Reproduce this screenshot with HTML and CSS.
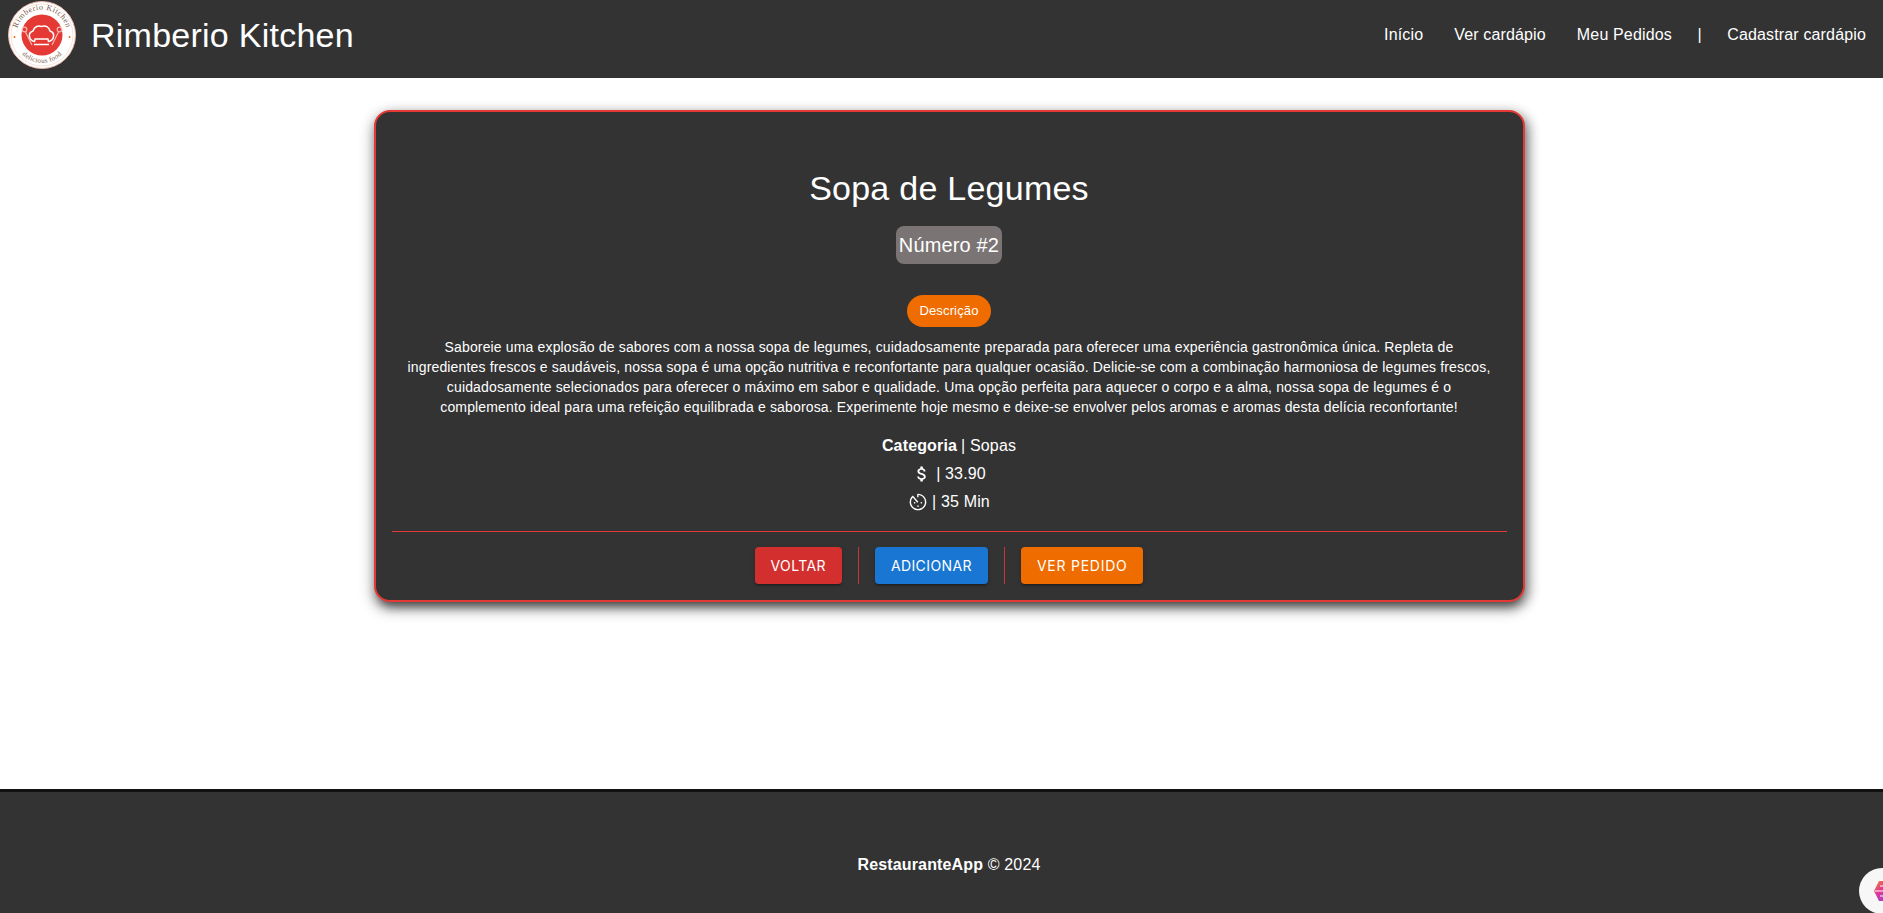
FILE: index.html
```html
<!DOCTYPE html>
<html lang="pt">
<head>
<meta charset="utf-8">
<title>Rimberio Kitchen</title>
<link rel="stylesheet" href="styles.css">
</head>
<body>
<header class="topbar">
  <div class="brand">
    <svg class="logo" viewBox="0 0 68 68" width="68" height="68" aria-hidden="true">
      <circle cx="34" cy="34" r="33.500" fill="#fff" stroke="#e8b4a8" stroke-width="1"/>
      <circle cx="34" cy="34" r="31" fill="none" stroke="#e8c9b8" stroke-width=".5"/>
      <circle cx="34" cy="34" r="20.500" fill="#e53935"/>
      <defs>
        <path id="arcTop" d="M9.400 27.400 A25.500 25.500 0 0 1 58.600 27.400"/>
        <path id="arcBottom" d="M9.800 48 A28 28 0 0 0 58.200 48"/>
      </defs>
      <text class="logo-text logo-top"><textPath href="#arcTop" startOffset="50%">Rimberio Kitchen</textPath></text>
      <text class="logo-text logo-bottom"><textPath href="#arcBottom" startOffset="50%">delicious food</textPath></text>
      <circle cx="6.500" cy="36" r="1" fill="#ef6c00"/>
      <circle cx="61.500" cy="36" r="1" fill="#ef6c00"/>
      <path d="M26 43.500 L41 43.500 M26.500 40.500 C20.500 39.500 19.500 31.500 25 30 C26.500 25 30.500 24.500 33.500 25.500 C37.500 24 41 26 42 30 C47.500 31.500 46.500 39.500 40.500 40.500 L40 38 L27 38 Z" fill="none" stroke="#fff" stroke-width="1.500" stroke-linejoin="round"/>
      <path d="M17.500 31 L24 44 M50.500 31 L44 44" stroke="#f6b7ae" stroke-width="1.200"/>
      <circle cx="16.500" cy="28.500" r="2.300" fill="none" stroke="#f6b7ae" stroke-width="1.200"/>
      <circle cx="51.500" cy="28.500" r="2.300" fill="none" stroke="#f6b7ae" stroke-width="1.200"/>
    </svg>
    <span class="brand-name">Rimberio Kitchen</span>
  </div>
  <nav class="nav">
    <a class="nav-link">Início</a>
    <a class="nav-link">Ver cardápio</a>
    <a class="nav-link">Meu Pedidos</a>
    <span class="nav-sep">|</span>
    <a class="nav-link">Cadastrar cardápio</a>
  </nav>
</header>

<main class="content">
  <section class="card">
    <h1 class="dish-title">Sopa de Legumes</h1>
    <div class="number-row"><span class="number-chip">Número #2</span></div>
    <div class="desc-row"><span class="desc-chip">Descrição</span></div>
    <p class="description">Saboreie uma explosão de sabores com a nossa sopa de legumes, cuidadosamente preparada para oferecer uma experiência gastronômica única. Repleta de ingredientes frescos e saudáveis, nossa sopa é uma opção nutritiva e reconfortante para qualquer ocasião. Delicie-se com a combinação harmoniosa de legumes frescos, cuidadosamente selecionados para oferecer o máximo em sabor e qualidade. Uma opção perfeita para aquecer o corpo e a alma, nossa sopa de legumes é o complemento ideal para uma refeição equilibrada e saborosa. Experimente hoje mesmo e deixe-se envolver pelos aromas e aromas desta delícia reconfortante!</p>
    <p class="meta"><strong>Categoria</strong> | Sopas</p>
    <p class="meta">
      <svg class="meta-icon" viewBox="0 0 24 24" width="20" height="20" aria-hidden="true"><path fill="currentColor" d="M11.800 10.900c-2.270-.59-3-1.200-3-2.150 0-1.090 1.010-1.850 2.700-1.850 1.780 0 2.440.85 2.500 2.100h2.210c-.07-1.720-1.120-3.300-3.210-3.810V3h-3v2.160c-1.940.42-3.500 1.680-3.500 3.610 0 2.310 1.910 3.460 4.700 4.130 2.500.6 3 1.480 3 2.410 0 .69-.49 1.790-2.700 1.790-2.060 0-2.870-.92-2.980-2.100h-2.200c.12 2.190 1.760 3.420 3.680 3.830V21h3v-2.150c1.950-.37 3.500-1.500 3.500-3.550 0-2.840-2.430-3.810-4.700-4.400z"/></svg>
      | 33.90
    </p>
    <p class="meta">
      <svg class="meta-icon" viewBox="0 0 24 24" width="20" height="20" aria-hidden="true"><path fill="currentColor" d="M12 2c-.550 0-1 .450-1 1v3.200h1.600V3.650c4.300.3 7.700 3.900 7.700 8.350 0 4.600-3.700 8.300-8.300 8.300S3.700 16.600 3.700 12c0-2.100.8-4 2.100-5.500l5.300 6.300 1.300-1.100L5.900 4.300C3.500 6.100 2 8.900 2 12c0 5.520 4.480 10 10 10s10-4.480 10-10S17.520 2 12 2zM7 13c0 .550.450 1 1 1s1-.450 1-1-.450-1-1-1-1 .450-1 1zm5 3c-.550 0-1 .450-1 1s.450 1 1 1 1-.450 1-1-.450-1-1-1zm5-3c0-.550-.450-1-1-1s-1 .450-1 1 .450 1 1 1 1-.450 1-1z"/></svg>
      | 35 Min
    </p>
    <hr class="rule">
    <div class="actions">
      <button class="btn btn-red">Voltar</button>
      <span class="vsep"></span>
      <button class="btn btn-blue">Adicionar</button>
      <span class="vsep"></span>
      <button class="btn btn-orange">Ver pedido</button>
    </div>
  </section>
</main>

<footer class="footer">
  <p class="footer-text"><strong>RestauranteApp</strong> © 2024</p>
</footer>

<div class="fab">
  <svg viewBox="0 0 22 22" width="22" height="22" aria-hidden="true">
    <defs><linearGradient id="fabGrad" x1="0" y1="0" x2="1" y2="1"><stop offset="0" stop-color="#f0852d"/><stop offset=".4" stop-color="#e0359a"/><stop offset="1" stop-color="#6a4cf0"/></linearGradient></defs>
    <path d="M5 1 L17 1 L22 11 L17 21 L5 21 L0 11 Z" fill="url(#fabGrad)"/>
    <path d="M1 11h8M6 6h6M6 16h6" stroke="#fff" stroke-width="1.200"/>
  </svg>
</div>
</body>
</html>
```
FILE: styles.css
```css
* { box-sizing: border-box; }
html, body { height: 100%; }
body {
  margin: 0;
  height: 913px;
  overflow: hidden;
  display: flex;
  flex-direction: column;
  background: #fff;
  font-family: "Liberation Sans", Arial, sans-serif;
  letter-spacing: .15px;
  color: #fff;
}
.topbar {
  height: 78px;
  flex: none;
  background: #333;
  display: flex;
  align-items: center;
  justify-content: space-between;
  padding: 0 17px 0 8px;
}
.brand { display: flex; align-items: center; gap: 15px; margin-top: -8px; }
.logo { display: block; }
.logo-text { font-family: "Liberation Serif", serif; fill: #7a5a4a; text-anchor: middle; }
.logo-top { font-size: 8px; letter-spacing: .5px; }
.logo-bottom { font-size: 7px; letter-spacing: .3px; }
.brand-name { font-size: 34px; line-height: 40px; letter-spacing: .25px; }
.nav { display: flex; align-items: center; gap: 31px; font-size: 16px; margin-top: -9px; }
.nav-link { color: #fff; }
.nav-sep { margin: 0 -5.500px; }
.content {
  flex: 1;
  display: flex;
  justify-content: center;
  align-items: flex-start;
  padding: 32px 0 0 15px;
}
.card {
  width: 1151px;
  height: 492px;
  background: #333;
  border: 2px solid #e53935;
  border-radius: 16px;
  box-shadow: 0 8px 10px -5px rgba(0,0,0,.5), 0 6px 14px 2px rgba(0,0,0,.3), 4px 4px 12px rgba(0,0,0,.3);
  padding: 56px 16px 0;
  text-align: center;
}
.dish-title { margin: 0; font-size: 34px; line-height: 40px; font-weight: 400; letter-spacing: .25px; }
.number-row { margin-top: 18px; }
.number-chip {
  display: inline-block;
  background: #7a7574;
  border-radius: 8px;
  padding: 0 3px;
  font-size: 20px;
  line-height: 38px;
  height: 38px;
}
.desc-row { margin-top: 31px; }
.desc-chip {
  display: inline-block;
  background: #ef6c00;
  border-radius: 16px;
  height: 32px;
  line-height: 32px;
  padding: 0 12px;
  font-size: 13px;
}
.description { margin: 10px 16px 0; font-size: 14px; line-height: 20px; }
.meta { margin: 0; font-size: 16px; line-height: 28px; display: flex; align-items: center; justify-content: center; gap: 4px; }
.description + .meta { margin-top: 15px; }
.meta-icon { display: block; }
.rule { margin: 15px 0 15px; border: 0; border-top: 1px solid #e53935; }
.actions { display: flex; justify-content: center; gap: 16px; height: 37px; }
.vsep { width: 1px; background: #e53935; opacity: .8; }
.btn {
  border: 0;
  border-radius: 4px;
  color: #fff;
  height: 37px;
  padding: 0 16px;
  font-family: Inter, Roboto, sans-serif;
  font-size: 14px;
  font-weight: 400;
  letter-spacing: .4px;
  text-transform: uppercase;
  box-shadow: 0 3px 1px -2px rgba(0,0,0,.2), 0 2px 2px rgba(0,0,0,.14), 0 1px 5px rgba(0,0,0,.12);
}
.btn-red { background: #d32f2f; }
.btn-blue { background: #1976d2; }
.btn-orange { background: #ef6c00; letter-spacing: .75px; }
.footer {
  flex: none;
  height: 124px;
  background: #333;
  border-top: 3px solid #111;
  display: flex;
  align-items: center;
  justify-content: center;
  padding: 24px 0 0 15px;
}
.footer-text { margin: 0; font-size: 16px; }
.fab {
  position: absolute;
  left: 1859px;
  top: 868px;
  width: 52px;
  height: 46px;
  border-radius: 23px;
  background: #f7f7f7;
  display: flex;
  align-items: center;
  justify-content: center;
}
```
